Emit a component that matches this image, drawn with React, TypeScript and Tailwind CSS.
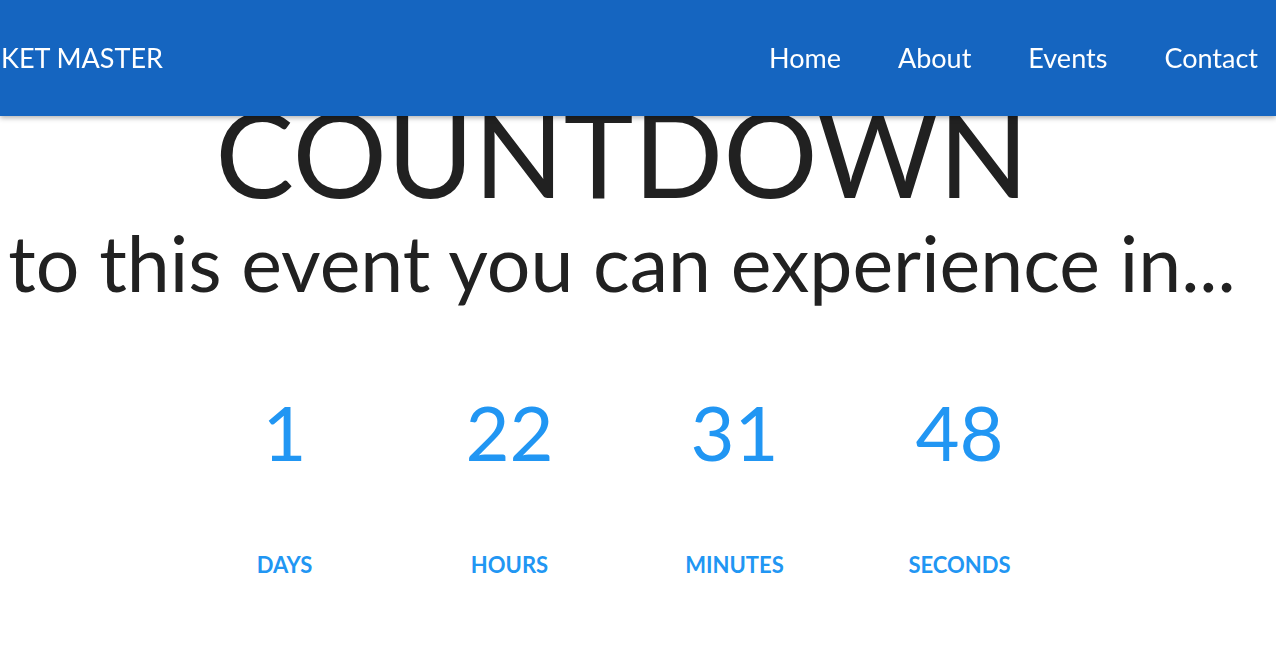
const units = [
  { value: "1", label: "DAYS" },
  { value: "22", label: "HOURS" },
  { value: "31", label: "MINUTES" },
  { value: "48", label: "SECONDS" },
];

export default function App() {
  return (
    <div className="min-h-screen bg-white font-['Lato','Liberation_Sans',sans-serif] text-[#212121]">
      <nav className="fixed inset-x-0 top-0 z-10 flex h-[116px] items-center justify-between bg-[#1565c0] text-[27px] text-white shadow-[0_2px_5px_rgba(0,0,0,0.3)]">
        <a className="pl-[1px]">KET MASTER</a>
        <ul className="flex items-center gap-[57px] pr-[18px]">
          <li>Home</li>
          <li>About</li>
          <li>Events</li>
          <li>Contact</li>
        </ul>
      </nav>

      <main className="mr-[32px] pt-[94px] text-center">
        <h1 className="text-[118px] leading-none font-normal">COUNTDOWN</h1>
        <h2 className="mt-[12px] whitespace-nowrap text-[77px] leading-none font-normal">to this event you can experience in...</h2>

        <div className="mt-[93px] flex justify-center text-[#2196f3]">
          {units.map((u) => (
            <div key={u.label} className="flex w-[225px] flex-col items-center">
              <span className="text-[76px] leading-none">{u.value}</span>
              <span className="mt-[84px] text-[22px] leading-none font-bold">{u.label}</span>
            </div>
          ))}
        </div>
      </main>
    </div>
  );
}
